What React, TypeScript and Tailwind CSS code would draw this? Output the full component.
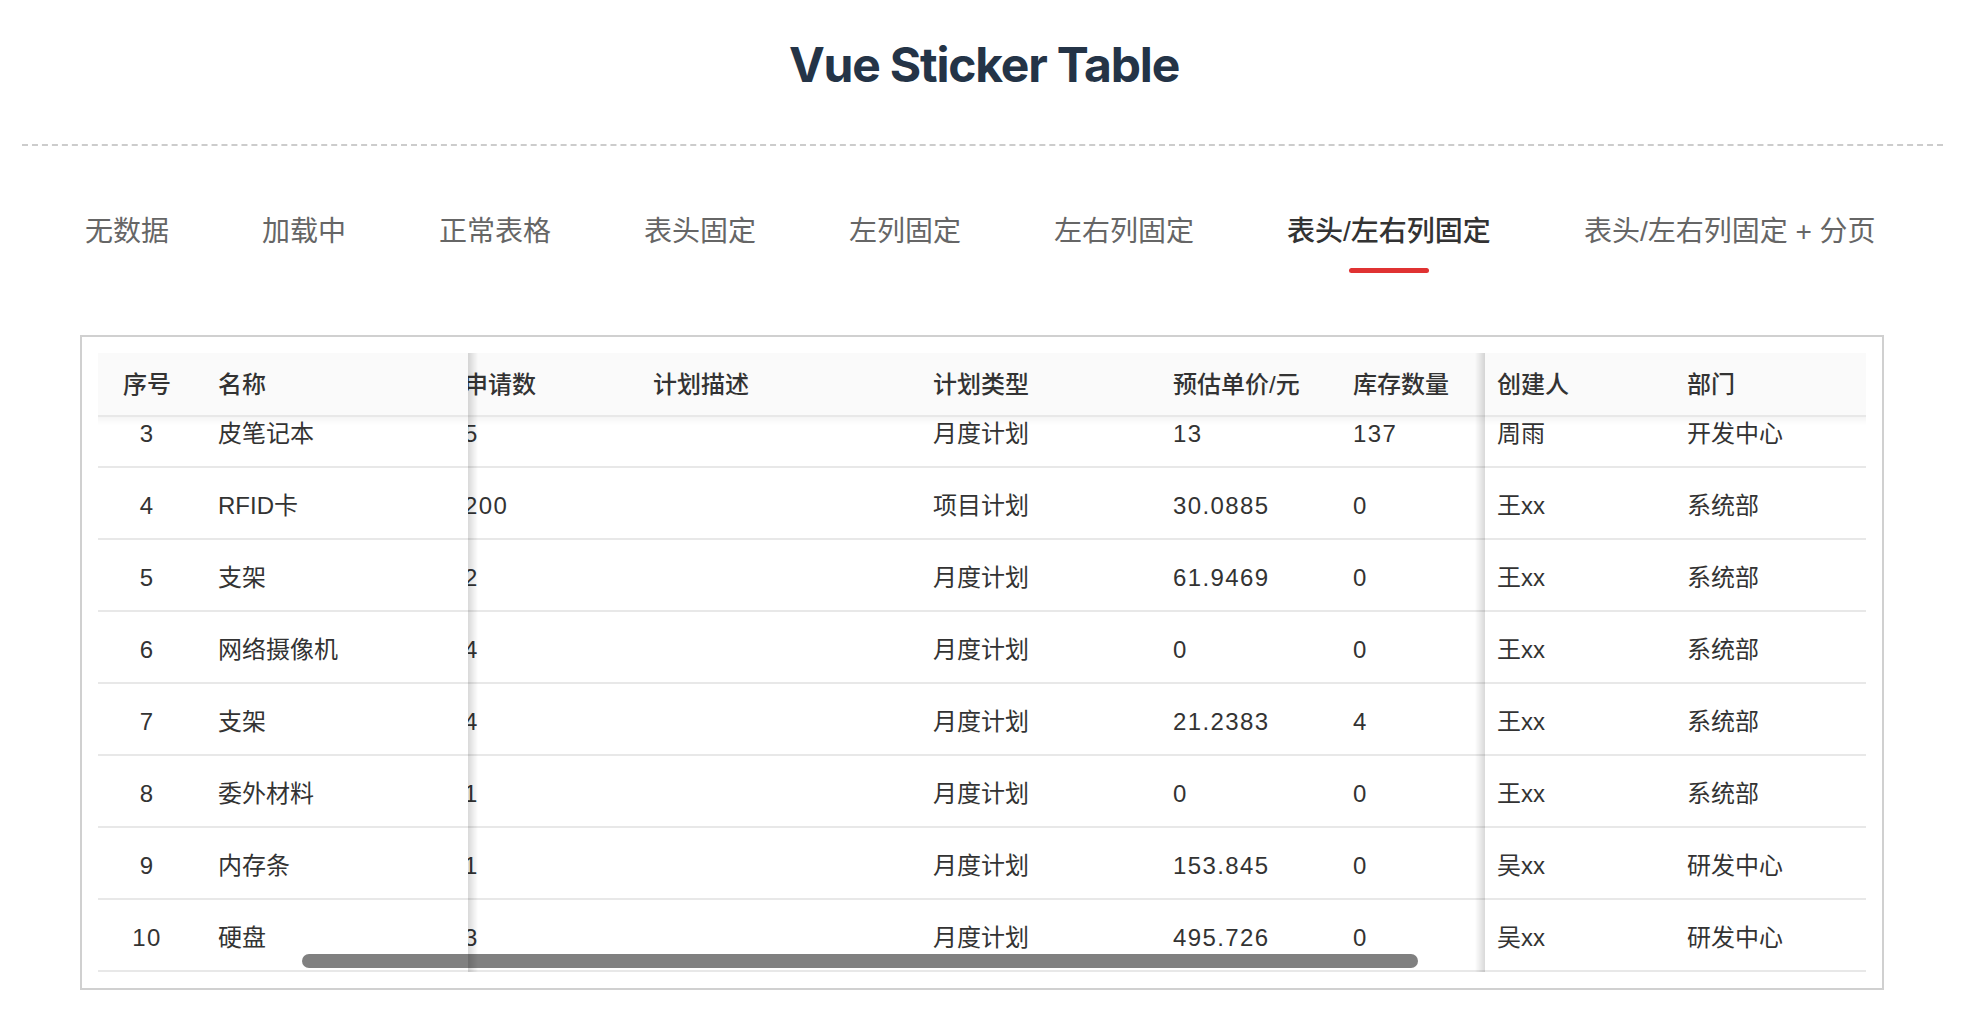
import React, { useLayoutEffect, useRef } from 'react';

type Row = {
  id: number;
  name: string;
  apply: string;
  desc: string;
  type: string;
  price: string;
  stock: string;
  creator: string;
  dept: string;
};

const rows: Row[] = [
  { id: 1, name: '笔记本电脑', apply: '2', desc: '', type: '月度计划', price: '4599', stock: '3', creator: '周雨', dept: '开发中心' },
  { id: 2, name: '显示器', apply: '6', desc: '', type: '月度计划', price: '899', stock: '12', creator: '周雨', dept: '开发中心' },
  { id: 3, name: '皮笔记本', apply: '5', desc: '', type: '月度计划', price: '13', stock: '137', creator: '周雨', dept: '开发中心' },
  { id: 4, name: 'RFID卡', apply: '200', desc: '', type: '项目计划', price: '30.0885', stock: '0', creator: '王xx', dept: '系统部' },
  { id: 5, name: '支架', apply: '2', desc: '', type: '月度计划', price: '61.9469', stock: '0', creator: '王xx', dept: '系统部' },
  { id: 6, name: '网络摄像机', apply: '4', desc: '', type: '月度计划', price: '0', stock: '0', creator: '王xx', dept: '系统部' },
  { id: 7, name: '支架', apply: '4', desc: '', type: '月度计划', price: '21.2383', stock: '4', creator: '王xx', dept: '系统部' },
  { id: 8, name: '委外材料', apply: '1', desc: '', type: '月度计划', price: '0', stock: '0', creator: '王xx', dept: '系统部' },
  { id: 9, name: '内存条', apply: '1', desc: '', type: '月度计划', price: '153.845', stock: '0', creator: '吴xx', dept: '研发中心' },
  { id: 10, name: '硬盘', apply: '3', desc: '', type: '月度计划', price: '495.726', stock: '0', creator: '吴xx', dept: '研发中心' },
];

const tabs = ['无数据', '加载中', '正常表格', '表头固定', '左列固定', '左右列固定', '表头/左右列固定', '表头/左右列固定 + 分页'];
const ACTIVE = 6;

const th = 'sticky top-0 h-[64px] bg-[#fafafa] border-b-2 border-[#e8e8e8] px-3 pt-[2px] text-left font-medium whitespace-nowrap';
const td = 'h-[72px] border-b-2 border-[#e8e8e8] px-3 pt-[6px] font-normal whitespace-nowrap';
// numbers in the reference font run a bit wider than Liberation Sans
const num = 'tracking-[1.4px]';

export default function App() {
  const scrollRef = useRef<HTMLDivElement>(null);

  useLayoutEffect(() => {
    const el = scrollRef.current;
    if (el) {
      el.scrollTop = el.scrollHeight;
      el.scrollLeft = 16;
    }
  }, []);

  return (
    <div className="min-h-screen bg-white pt-[36px] font-['Liberation_Sans','Noto_Sans_CJK_SC',sans-serif]">
      <h1 className="text-center font-['Inter',sans-serif] text-[48px] font-bold leading-[58px] tracking-tight text-[#243447]">
        Vue Sticker Table
      </h1>

      <div className="mt-[50px] ml-[22px] mr-[25px] border-t-2 border-dashed border-[#cccccc]" />

      <div className="mt-[66px] ml-[85px] flex gap-[93px]">
        {tabs.map((t, i) => (
          <div key={t} className="flex flex-col items-center">
            <span
              className={`whitespace-nowrap text-[28px] leading-[40px] ${
                i === ACTIVE ? 'font-medium text-[#333333]' : 'text-[#666666]'
              }`}
            >
              {t}
            </span>
            <span className={`mt-[16px] h-[5px] w-[80px] rounded-full ${i === ACTIVE ? 'bg-[#e03232]' : 'bg-transparent'}`} />
          </div>
        ))}
      </div>

      <div className="mt-[62px] ml-[80px] mr-[84px] border-2 border-[#d0d0d0] p-4">
        <div className="relative h-[619px]">
          <div ref={scrollRef} className="h-full overflow-hidden">
            <table className="w-[1840px] table-fixed border-separate border-spacing-0 text-[24px] text-[#333333]">
              <colgroup>
                <col className="w-[98px]" />
                <col className="w-[272px]" />
                <col className="w-[189px]" />
                <col className="w-[280px]" />
                <col className="w-[240px]" />
                <col className="w-[180px]" />
                <col className="w-[200px]" />
                <col className="w-[190px]" />
                <col className="w-[191px]" />
              </colgroup>
              <thead>
                <tr>
                  <th className={`${th} left-0 z-30 !px-0 !text-center`}>序号</th>
                  <th className={`${th} left-[98px] z-30 !pl-[22px]`}>名称</th>
                  <th className={`${th} z-10`}>申请数</th>
                  <th className={`${th} z-10`}>计划描述</th>
                  <th className={`${th} z-10`}>计划类型</th>
                  <th className={`${th} z-10`}>预估单价/元</th>
                  <th className={`${th} z-10`}>库存数量</th>
                  <th className={`${th} right-[191px] z-30`}>创建人</th>
                  <th className={`${th} right-0 z-30`}>部门</th>
                </tr>
              </thead>
              <tbody>
                {rows.map((r) => (
                  <tr key={r.id}>
                    <td className={`${td} ${num} sticky left-0 z-20 bg-white !px-0 text-center`}>{r.id}</td>
                    <td className={`${td} sticky left-[98px] z-20 bg-white !pl-[22px]`}>{r.name}</td>
                    <td className={`${td} ${num}`}>{r.apply}</td>
                    <td className={td}>{r.desc}</td>
                    <td className={td}>{r.type}</td>
                    <td className={`${td} ${num}`}>{r.price}</td>
                    <td className={`${td} ${num}`}>{r.stock}</td>
                    <td className={`${td} sticky right-[191px] z-20 bg-white`}>{r.creator}</td>
                    <td className={`${td} sticky right-0 z-20 bg-white`}>{r.dept}</td>
                  </tr>
                ))}
              </tbody>
            </table>
          </div>

          <div className="pointer-events-none absolute left-0 right-0 top-[64px] z-30 h-[8px] bg-linear-to-b from-black/[0.04] to-transparent" />
          <div className="pointer-events-none absolute bottom-[4px] left-[204px] z-40 h-[14px] w-[1116px] rounded-full bg-[#808080]" />
          <div className="pointer-events-none absolute inset-y-0 left-[370px] z-50 w-[10px] bg-linear-to-r from-black/15 to-transparent" />
          <div className="pointer-events-none absolute inset-y-0 right-[381px] z-50 w-[10px] bg-linear-to-l from-black/15 to-transparent" />
        </div>
      </div>
    </div>
  );
}
